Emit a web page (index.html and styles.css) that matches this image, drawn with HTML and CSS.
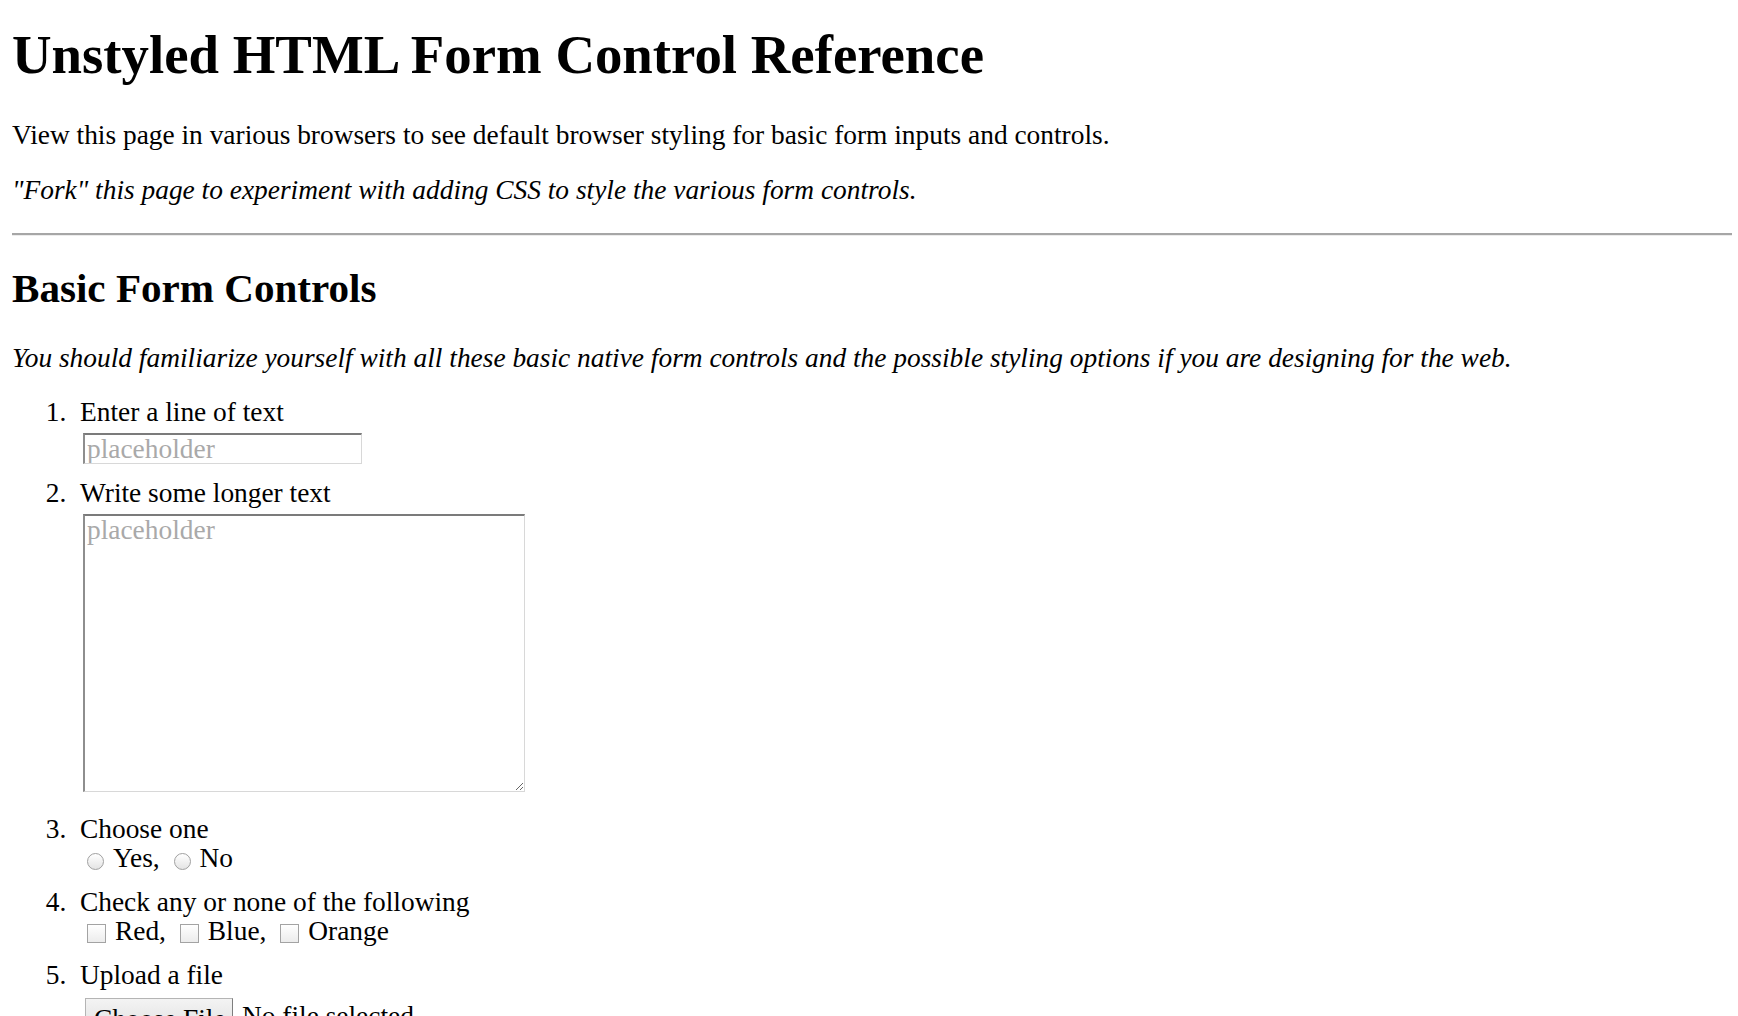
FILE: index.html
```html
<!DOCTYPE html>
<html lang="en">
<head>
<meta charset="utf-8">
<title>Unstyled HTML Form Control Reference</title>
<link rel="stylesheet" href="styles.css">
</head>
<body>
<h1 class="title">Unstyled HTML Form Control Reference</h1>
<p class="intro">View this page in various browsers to see default browser styling for basic form inputs and controls.</p>
<p class="intro note">"Fork" this page to experiment with adding CSS to style the various form controls.</p>
<hr class="rule">
<h2 class="section-title">Basic Form Controls</h2>
<p class="section-note">You should familiarize yourself with all these basic native form controls and the possible styling options if you are designing for the web.</p>
<ol class="controls">
  <li class="control">
    <label class="q" for="line">Enter a line of text</label>
    <div class="a"><input id="line" class="text-input" type="text" placeholder="placeholder"></div>
  </li>
  <li class="control">
    <label class="q" for="longer">Write some longer text</label>
    <div class="a a-area"><textarea id="longer" class="text-area" placeholder="placeholder"></textarea></div>
  </li>
  <li class="control">
    <span class="q">Choose one</span>
    <div class="a choices"><label class="choice"><input class="radio" type="radio" name="yn">Yes,</label> <label class="choice"><input class="radio" type="radio" name="yn">No</label></div>
  </li>
  <li class="control">
    <span class="q">Check any or none of the following</span>
    <div class="a choices"><label class="choice"><input class="check" type="checkbox">Red,</label> <label class="choice"><input class="check" type="checkbox">Blue,</label> <label class="choice"><input class="check" type="checkbox">Orange</label></div>
  </li>
  <li class="control">
    <span class="q">Upload a file</span>
    <div class="a file-row"><button class="file-button" type="button">Choose File</button><span class="file-name">No file selected</span></div>
  </li>
</ol>
</body>
</html>
```
FILE: styles.css
```css
html {
  background: #fff;
  overflow: hidden;
}

body {
  margin: 0 6px 0 12px;
  font-family: "Liberation Serif", "Times New Roman", serif;
  font-size: 27.4px;
  line-height: 29px;
  color: #000;
}

.title {
  margin: 24px 0 0;
  font-size: 54.8px;
  line-height: 62px;
  font-weight: bold;
}

.intro {
  margin: 34.7px 0 0;
}

.note {
  margin-top: 26.5px;
  font-style: italic;
}

.rule {
  margin: 28.2px 0 0;
  height: 0;
  border: 0;
  border-top: 2px solid #a6a6a6;
  border-bottom: 1px solid #ececec;
}

.section-title {
  margin: 28.7px 0 0;
  font-size: 41.1px;
  line-height: 47px;
  font-weight: bold;
}

.section-note {
  margin: 31.5px 0 0;
  font-style: italic;
}

.controls {
  margin: 25px 0 0;
  padding-left: 68px;
}

.control {
  margin-top: 15px;
}

.control:first-child {
  margin-top: 0;
}

.control::marker {
  content: counter(list-item) ".\2002";
}

.q {
  display: block;
}

.text-input {
  display: block;
  box-sizing: border-box;
  width: 279px;
  height: 31px;
  margin: 6.7px 0 0 3px;
  padding: 0 2px;
  font: inherit;
  line-height: 27px;
  color: #000;
  background: #fff;
  border-top: 2px solid #7b7b7b;
  border-left: 2px solid #8e8e8e;
  border-right: 1px solid #d8d8d8;
  border-bottom: 1px solid #d8d8d8;
  border-radius: 0;
  outline: none;
}

.a-area {
  padding-bottom: 8.3px;
}

.text-area {
  display: block;
  box-sizing: border-box;
  width: 442px;
  height: 278px;
  margin: 5.7px 0 0 3px;
  padding: 0 2px;
  font: inherit;
  line-height: 29px;
  color: #000;
  background: #fff;
  border-top: 2px solid #7b7b7b;
  border-left: 2px solid #8e8e8e;
  border-right: 1px solid #d8d8d8;
  border-bottom: 1px solid #d8d8d8;
  border-radius: 0;
  outline: none;
  resize: both;
}

.text-input::placeholder,
.text-area::placeholder {
  color: #a9a9a9;
  opacity: 1;
}

.choice {
  white-space: nowrap;
}

.radio {
  appearance: none;
  -webkit-appearance: none;
  box-sizing: border-box;
  width: 17px;
  height: 17px;
  margin: 0 9px 0 7px;
  vertical-align: -3px;
  border: 1px solid #a0a0a0;
  border-radius: 50%;
  background: linear-gradient(#ffffff, #e4e4e4);
}

.check {
  appearance: none;
  -webkit-appearance: none;
  box-sizing: border-box;
  width: 19px;
  height: 19px;
  margin: 0 9px 0 7px;
  vertical-align: -3px;
  border: 1px solid #a3a3a3;
  border-radius: 0;
  background: linear-gradient(#ffffff, #ececec);
}

.file-row {
  display: flex;
  align-items: flex-start;
  margin-top: 7.7px;
}

.file-button {
  box-sizing: border-box;
  width: 148px;
  height: 40px;
  margin: 0 0 0 5px;
  padding: 3px 0 0 8px;
  font: inherit;
  line-height: 29px;
  color: #000;
  text-align: left;
  white-space: nowrap;
  background: linear-gradient(#f3f3f3, #dedede);
  border: 1px solid #b4b4b4;
  border-right-color: #7e7e7e;
  border-radius: 0;
}

.file-name {
  margin-left: 9px;
  padding-top: 4px;
}
```
